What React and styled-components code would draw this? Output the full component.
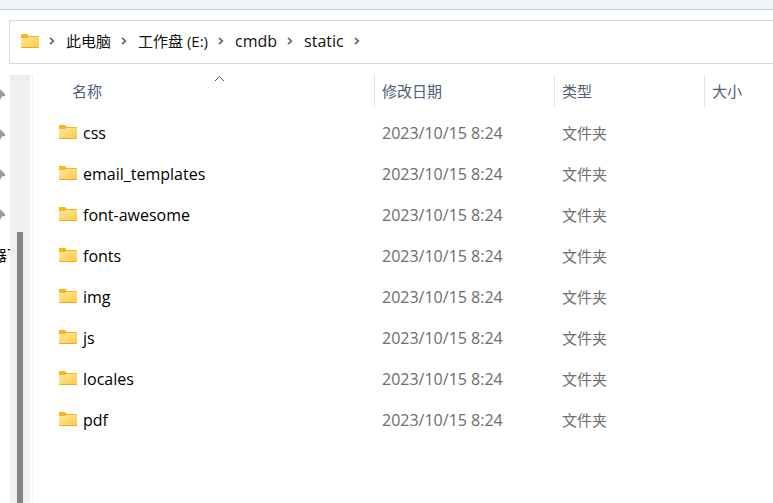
import React from 'react'
import styled, { createGlobalStyle } from "styled-components";

const GlobalStyle = createGlobalStyle`
  * {
    box-sizing: border-box;
  }
  body {
    margin: 0;
    background: #fff;
    font-family: "Open Sans", "Noto Sans CJK SC", sans-serif;
    font-size: 15px;
    line-height: 20px;
  }
  button {
    font: inherit;
    color: inherit;
    background: none;
    border: 0;
    padding: 0;
  }
`;

const Window = styled.div`
  display: flex;
  flex-direction: column;
  height: 100vh;
  overflow: hidden;
`;

const Toolbar = styled.div`
  flex: none;
  height: 10px;
  background: #f0f4f6;
  border-bottom: 1px solid #c4cacd;
`;

const AddressBar = styled.nav`
  flex: none;
  display: flex;
  align-items: center;
  height: 44px;
  margin: 10px 0 11px 9px;
  padding: 0 0 2px 11px;
  border: 1px solid #d9d9d9;
  border-right: 0;
`;

const Crumb = styled.button`
  color: #111;
  font-size: ${props => (props.$latin ? "16px" : "15px")};
  white-space: nowrap;
`;

const CrumbArrow = styled.svg`
  flex: none;
  width: 6px;
  height: 8px;
  margin: 0 11px 0 10px;
  fill: none;
  stroke: #666;
  stroke-width: 1.7;
`;

const Main = styled.div`
  flex: 1;
  display: flex;
  min-height: 0;
`;

const Sidebar = styled.aside`
  flex: none;
  width: 10px;
  overflow: hidden;
`;

// the quick access list is scrolled out to the left
const QuickList = styled.ul`
  list-style: none;
  width: 120px;
  margin: 0 0 0 -8px;
  padding: 0;
`;

const QuickItem = styled.li`
  display: flex;
  align-items: center;
  height: 40px;
`;

const PinIcon = styled.svg`
  width: 14px;
  height: 14px;
  fill: #939fa7;
`;

const ScrollTrack = styled.div`
  flex: none;
  width: 20px;
  padding: 157px 7px 0;
  background: #efefef;
`;

const ScrollThumb = styled.div`
  width: 6px;
  height: 100%;
  background: #858585;
`;

const Content = styled.main`
  flex: 1;
  min-width: 0;
  margin-left: 2px;
  border-left: 1px solid #f2f2f2;
`;

const FileTable = styled.table`
  width: 100%;
  table-layout: fixed;
  border-collapse: separate;
  border-spacing: 0;
`;

const Col = styled.col`
  width: ${props => props.$width};
`;

const HeadCell = styled.th`
  position: relative;
  height: 32px;
  padding: 0 0 0 ${props => (props.$first ? "39px" : "7px")};
  border-right: ${props => (props.$last ? "0" : "1px solid #e2e2e2")};
  color: #4c607a;
  font-weight: normal;
  text-align: left;
`;

const SortArrow = styled.svg`
  position: absolute;
  top: 0;
  left: 181px;
  width: 11px;
  height: 7px;
  fill: none;
  stroke: #555;
`;

const Cell = styled.td`
  height: 41px;
  padding: 0 0 0 7px;
  color: #6d6d6d;
  white-space: nowrap;
`;

const DateCell = styled(Cell)`
  font-size: 16px;
`;

const NameCell = styled(Cell)`
  padding-left: 26px;
  color: #000;
  font-size: 16px;
`;

const FileName = styled.div`
  display: flex;
  align-items: center;
  gap: 6px;
  svg {
    margin-bottom: 2px;
  }
`;

const FolderSvg = styled.svg`
  flex: none;
  width: 18px;
  height: 14px;
`;

const Spacer = styled.tbody`
  td {
    height: 5px;
    padding: 0;
  }
`;

const path = [
  { name: "此电脑" },
  { name: "工作盘 (E:)" },
  { name: "cmdb", latin: true },
  { name: "static", latin: true },
];

const folders = [
  "css",
  "email_templates",
  "font-awesome",
  "fonts",
  "img",
  "js",
  "locales",
  "pdf",
];

function Folder() {
  return (
    <FolderSvg viewBox="0 0 18 14" aria-hidden="true">
      <defs>
        <linearGradient id="folder" x1="0" y1="0" x2="1" y2="1">
          <stop offset="0" stopColor="#ffe8a3" />
          <stop offset="1" stopColor="#ffc93c" />
        </linearGradient>
      </defs>
      <path d="M0 .7Q0 0 .7 0H5.5Q6.3 0 6.8 .8L8 2H17.5L18 2.5V5H0Z" fill="#f9b61c" />
      <path d="M0 4H6L7.5 3H18V13.5L17.5 14H.5L0 13.5Z" fill="url(#folder)" />
      <path d="M.3 13.5H17.7" stroke="#e9ab2d" />
    </FolderSvg>
  );
}

function Arrow() {
  return (
    <CrumbArrow viewBox="0 0 6 8" aria-hidden="true">
      <path d="M1 .8L4.3 4L1 7.2" />
    </CrumbArrow>
  );
}

export default function App() {
  return (
    <>
      <GlobalStyle />
      <Window>
        <Toolbar />
        <AddressBar>
          <Folder />
          <Arrow />
          {path.map(crumb => (
            <React.Fragment key={crumb.name}>
              <Crumb type="button" $latin={crumb.latin}>{crumb.name}</Crumb>
              <Arrow />
            </React.Fragment>
          ))}
        </AddressBar>
        <Main>
          <Sidebar>
            <QuickList>
              {[1, 2, 3, 4].map(n => (
                <QuickItem key={n}>
                  <PinIcon viewBox="0 0 14 14" aria-hidden="true">
                    <path d="M7.5 1.5L9 2L13 6V8L10 8.5L8 12L5 11L1 13L3 9L1 7L6 4Z" />
                  </PinIcon>
                </QuickItem>
              ))}
              <QuickItem>器下</QuickItem>
            </QuickList>
          </Sidebar>
          <ScrollTrack>
            <ScrollThumb />
          </ScrollTrack>
          <Content>
            <FileTable>
              <colgroup>
                <Col $width="342px" />
                <Col $width="180px" />
                <Col $width="150px" />
                <Col $width="auto" />
              </colgroup>
              <thead>
                <tr>
                  <HeadCell $first aria-sort="ascending">
                    <button type="button">名称</button>
                    <SortArrow viewBox="0 0 11 7" aria-hidden="true">
                      <path d="M1 6L5.5 1.5L10 6" />
                    </SortArrow>
                  </HeadCell>
                  <HeadCell><button type="button">修改日期</button></HeadCell>
                  <HeadCell><button type="button">类型</button></HeadCell>
                  <HeadCell $last><button type="button">大小</button></HeadCell>
                </tr>
              </thead>
              <Spacer>
                <tr><td colSpan={4} /></tr>
              </Spacer>
              <tbody>
                {folders.map(name => (
                  <tr key={name}>
                    <NameCell>
                      <FileName>
                        <Folder />
                        {name}
                      </FileName>
                    </NameCell>
                    <DateCell>2023/10/15 8:24</DateCell>
                    <Cell>文件夹</Cell>
                    <Cell />
                  </tr>
                ))}
              </tbody>
            </FileTable>
          </Content>
        </Main>
      </Window>
    </>
  );
}
